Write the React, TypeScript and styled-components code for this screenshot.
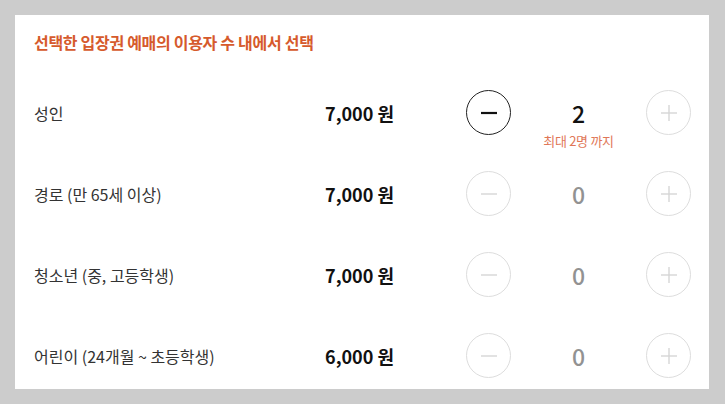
import * as React from 'react';
import styled, { createGlobalStyle } from 'styled-components';

type Ticket = {
  label: string;
  price: string;
  count: number;
  note?: string;
};

const tickets: Ticket[] = [
  { label: '성인', price: '7,000 원', count: 2, note: '최대 2명 까지' },
  { label: '경로 (만 65세 이상)', price: '7,000 원', count: 0 },
  { label: '청소년 (중, 고등학생)', price: '7,000 원', count: 0 },
  { label: '어린이 (24개월 ~ 초등학생)', price: '6,000 원', count: 0 },
];

const GlobalStyle = createGlobalStyle`
  html, body {
    margin: 0;
    padding: 0;
    background: #cccccc;
  }
  body {
    font-family: "Noto Sans CJK KR", "Noto Sans", sans-serif;
  }
`;

const StepIcon = ({ plus, active }: { plus?: boolean; active?: boolean }) => (
  <svg width="18" height="18" viewBox="0 0 18 18">
    <line
      x1="1"
      y1="9"
      x2="17"
      y2="9"
      stroke={active ? '#111' : '#d6d6d6'}
      strokeWidth={active ? 2.2 : 1.4}
    />
    {plus && (
      <line x1="9" y1="1" x2="9" y2="17" stroke={active ? '#111' : '#d6d6d6'} strokeWidth={active ? 2.2 : 1.4} />
    )}
  </svg>
);

const App: React.FC = () => {
  return (
    <Styled.Page>
      <GlobalStyle />
      <Styled.Panel>
        <Styled.Title>선택한 입장권 예매의 이용자 수 내에서 선택</Styled.Title>
        <Styled.List>
          {tickets.map((t) => (
            <Styled.Row key={t.label}>
              <Styled.Label>{t.label}</Styled.Label>
              <Styled.Price>{t.price}</Styled.Price>
              <Styled.Stepper>
                <Styled.RoundButton active={t.count > 0}>
                  <StepIcon active={t.count > 0} />
                </Styled.RoundButton>
                <Styled.Count active={t.count > 0}>
                  {t.count}
                  {t.note && <Styled.Note>{t.note}</Styled.Note>}
                </Styled.Count>
                <Styled.RoundButton>
                  <StepIcon plus />
                </Styled.RoundButton>
              </Styled.Stepper>
            </Styled.Row>
          ))}
        </Styled.List>
      </Styled.Panel>
    </Styled.Page>
  );
};

const Styled = {
  Page: styled.div`
    width: 725px;
    height: 404px;
    padding: 15px 16px 15px 15px;
    box-sizing: border-box;
    background: #cccccc;
  `,
  Panel: styled.div`
    background: #ffffff;
    height: 374px;
    box-sizing: border-box;
    padding: 16px 18px 10px 19px;
  `,
  Title: styled.h2`
    margin: 0;
    font-size: 16px;
    line-height: 22px;
    font-weight: 700;
    color: #d65a2c;
    letter-spacing: -0.3px;
  `,
  List: styled.div`
    margin-top: 37px;
    display: flex;
    flex-direction: column;
    gap: 36px;
  `,
  Row: styled.div`
    display: flex;
    align-items: center;
    height: 45px;
  `,
  Label: styled.div`
    flex: 1;
    font-size: 16px;
    color: #333333;
  `,
  Price: styled.div`
    font-size: 18px;
    font-weight: 700;
    color: #111111;
  `,
  Stepper: styled.div`
    display: flex;
    align-items: center;
    margin-left: 72px;
  `,
  RoundButton: styled.button<{ active?: boolean }>`
    width: 45px;
    height: 45px;
    border-radius: 50%;
    padding: 0;
    display: flex;
    align-items: center;
    justify-content: center;
    background: #ffffff;
    border: 1px solid ${(p) => (p.active ? '#222222' : '#dddddd')};
  `,
  Count: styled.div<{ active?: boolean }>`
    position: relative;
    width: 135px;
    text-align: center;
    font-size: 23px;
    font-weight: 500;
    color: ${(p) => (p.active ? '#111111' : '#929292')};
  `,
  Note: styled.div`
    position: absolute;
    left: 0;
    right: 0;
    top: 100%;
    margin-top: 1px;
    font-size: 13px;
    font-weight: 400;
    color: #df7758;
    letter-spacing: -0.3px;
  `,
};

export default App;
